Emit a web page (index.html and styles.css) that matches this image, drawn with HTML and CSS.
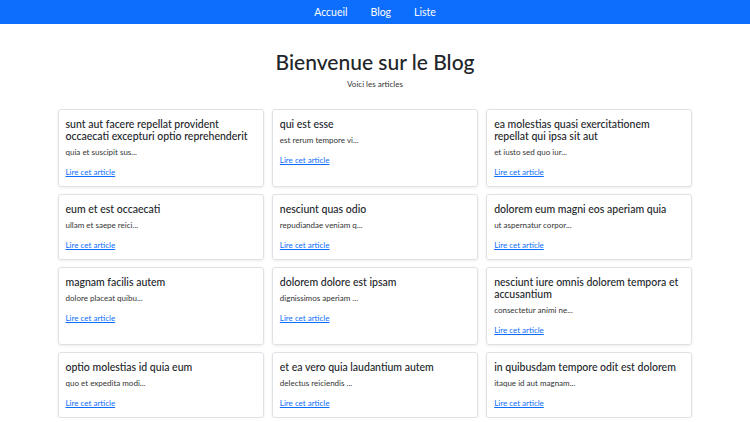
FILE: index.html
```html
<!DOCTYPE html>
<html lang="fr">
<head>
    <meta charset="UTF-8" />
    <meta name="viewport" content="width=device-width, initial-scale=1.0" />
    <title>Blog</title>
    <link rel="stylesheet" href="styles.css">
</head>
<body>
    <nav class="navbar">
        <a href="#">Accueil</a>
        <a href="#">Blog</a>
        <a href="#">Liste</a>
    </nav>

    <div class="page-header">
        <h1>Bienvenue sur le Blog</h1>
        <p>Voici les articles</p>
    </div>

    <div class="posts">
        <div class="post-card">
            <h5>sunt aut facere repellat provident occaecati excepturi optio reprehenderit</h5>
            <p>quia et suscipit sus...</p>
            <a href="#">Lire cet article</a>
        </div>
        <div class="post-card">
            <h5>qui est esse</h5>
            <p>est rerum tempore vi...</p>
            <a href="#">Lire cet article</a>
        </div>
        <div class="post-card">
            <h5>ea molestias quasi exercitationem repellat qui ipsa sit aut</h5>
            <p>et iusto sed quo iur...</p>
            <a href="#">Lire cet article</a>
        </div>
        <div class="post-card">
            <h5>eum et est occaecati</h5>
            <p>ullam et saepe reici...</p>
            <a href="#">Lire cet article</a>
        </div>
        <div class="post-card">
            <h5>nesciunt quas odio</h5>
            <p>repudiandae veniam q...</p>
            <a href="#">Lire cet article</a>
        </div>
        <div class="post-card">
            <h5>dolorem eum magni eos aperiam quia</h5>
            <p>ut aspernatur corpor...</p>
            <a href="#">Lire cet article</a>
        </div>
        <div class="post-card">
            <h5>magnam facilis autem</h5>
            <p>dolore placeat quibu...</p>
            <a href="#">Lire cet article</a>
        </div>
        <div class="post-card">
            <h5>dolorem dolore est ipsam</h5>
            <p>dignissimos aperiam ...</p>
            <a href="#">Lire cet article</a>
        </div>
        <div class="post-card">
            <h5>nesciunt iure omnis dolorem tempora et accusantium</h5>
            <p>consectetur animi ne...</p>
            <a href="#">Lire cet article</a>
        </div>
        <div class="post-card">
            <h5>optio molestias id quia eum</h5>
            <p>quo et expedita modi...</p>
            <a href="#">Lire cet article</a>
        </div>
        <div class="post-card">
            <h5>et ea vero quia laudantium autem</h5>
            <p>delectus reiciendis ...</p>
            <a href="#">Lire cet article</a>
        </div>
        <div class="post-card">
            <h5>in quibusdam tempore odit est dolorem</h5>
            <p>itaque id aut magnam...</p>
            <a href="#">Lire cet article</a>
        </div>
    </div>
</body>
</html>
```

FILE: styles.css
```css
* {
    margin: 0;
    padding: 0;
    box-sizing: border-box;
}

body {
    font-family: "Segoe UI", Lato, "Noto Sans", sans-serif;
    background: #ffffff;
    color: #212529;
}

.navbar {
    background: #0d6efd;
    height: 24px;
    display: flex;
    align-items: center;
    justify-content: center;
    gap: 23px;
}

.navbar a {
    color: #ffffff;
    text-decoration: none;
    font-size: 10.5px;
}

.page-header {
    text-align: center;
    padding-top: 24px;
}

.page-header h1 {
    font-size: 21px;
    font-weight: 500;
    line-height: 28px;
}

.page-header p {
    font-size: 8px;
    color: #333333;
    margin-top: 3px;
}

.posts {
    width: 635px;
    margin: 20px auto 0;
    display: grid;
    grid-template-columns: repeat(3, 1fr);
    column-gap: 8px;
    row-gap: 7px;
}

.post-card {
    border: 1px solid #dee2e6;
    border-radius: 3px;
    box-shadow: 0 1px 3px rgba(0, 0, 0, 0.08);
    padding: 8px 7px;
}

.post-card h5 {
    font-size: 10.5px;
    font-weight: 500;
    line-height: 12px;
    margin-bottom: 4px;
}

.post-card p {
    font-size: 8px;
    line-height: 12px;
    color: #333333;
    margin-bottom: 8px;
}

.post-card a {
    display: block;
    width: fit-content;
    font-size: 8px;
    line-height: 12px;
    color: #0d6efd;
}
```
